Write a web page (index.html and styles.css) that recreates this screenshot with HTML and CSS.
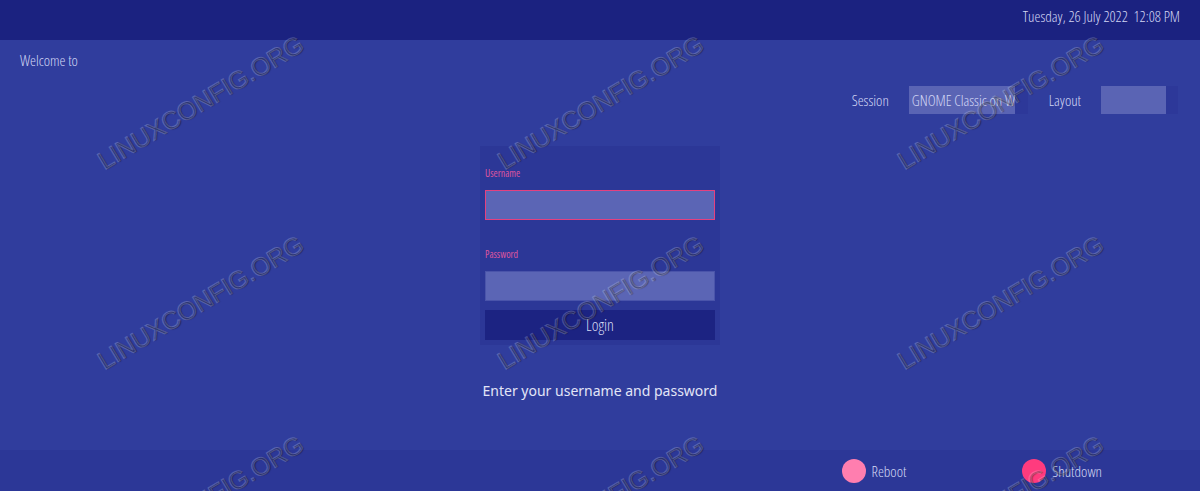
FILE: index.html
```html
<!DOCTYPE html>
<html lang="en">
<head>
    <meta charset="UTF-8">
    <meta name="viewport" content="width=device-width, initial-scale=1.0">
    <title>Login</title>
    <link rel="stylesheet" href="styles.css">
</head>
<body>
    <div class="topbar">
        <span class="clock">Tuesday, 26 July 2022&nbsp;&nbsp;12:08 PM</span>
    </div>

    <div class="main">
        <p class="welcome">Welcome to</p>

        <!-- Session / layout pickers -->
        <div class="pickers">
            <span class="picker-label">Session</span>
            <div class="select session">
                <span class="select-text">GNOME Classic on Wayland</span>
                <span class="select-arrow"></span>
            </div>
            <span class="picker-label">Layout</span>
            <div class="select layout">
                <span class="select-text"></span>
                <span class="select-arrow"></span>
            </div>
        </div>

        <!-- Login box -->
        <div class="login-box">
            <label class="field-label">Username</label>
            <div class="input focused"></div>
            <label class="field-label pw">Password</label>
            <div class="input"></div>
            <div class="login-btn">Login</div>
        </div>

        <p class="message">Enter your username and password</p>
    </div>

    <div class="bottombar">
        <div class="action">
            <span class="dot reboot"></span>
            <span>Reboot</span>
        </div>
        <div class="action">
            <span class="dot shutdown"></span>
            <span>Shutdown</span>
        </div>
    </div>

    <!-- Watermark over everything -->
    <div class="watermarks">
        <span>LINUXCONFIG.ORG</span>
        <span>LINUXCONFIG.ORG</span>
        <span>LINUXCONFIG.ORG</span>
        <span>LINUXCONFIG.ORG</span>
        <span>LINUXCONFIG.ORG</span>
        <span>LINUXCONFIG.ORG</span>
        <span>LINUXCONFIG.ORG</span>
        <span>LINUXCONFIG.ORG</span>
        <span>LINUXCONFIG.ORG</span>
    </div>
</body>
</html>
```

FILE: styles.css
```css
body {
    margin: 0;
    height: 100vh;
    overflow: hidden;
    background-color: #303d9d;
    font-family: "Open Sans", "DejaVu Sans", sans-serif;
    font-stretch: 75%;
    font-weight: 300;
    color: #d3d7f4;
    display: flex;
    flex-direction: column;
    position: relative;
}

.topbar {
    height: 40px;
    flex: none;
    background-color: #1b2280;
    display: flex;
    justify-content: flex-end;
    align-items: center;
    padding: 0 20px;
}

.clock {
    font-size: 15px;
    margin-top: -8px;
}

.main {
    flex: 1;
    display: flex;
    flex-direction: column;
}

.welcome {
    margin: 12px 0 0 20px;
    font-size: 15px;
    line-height: 16px;
}

.pickers {
    margin-top: 18px;
    padding-right: 22px;
    display: flex;
    justify-content: flex-end;
    align-items: center;
    height: 28px;
}

.picker-label {
    font-size: 15px;
    margin-right: 20px;
}

.select {
    display: flex;
    height: 28px;
    margin-right: 21px;
}

.select:last-child {
    margin-right: 0;
}

.select-text {
    background-color: #5a64b4;
    font-size: 15px;
    line-height: 28px;
    padding-left: 3px;
    white-space: nowrap;
    overflow: hidden;
    flex: none;
}

.select-arrow {
    background-color: #2d3899;
    flex: none;
}

.session .select-text { width: 103px; }
.session .select-arrow { width: 13px; }
.layout .select-text { width: 62px; }
.layout .select-arrow { width: 12px; }

.login-box {
    align-self: center;
    margin-top: 32px;
    width: 230px;
    padding: 21px 5px 5px;
    background-color: #2c3797;
    display: flex;
    flex-direction: column;
}

.field-label {
    color: #dd559f;
    font-size: 10px;
    font-weight: 400;
    line-height: 12px;
    margin-bottom: 11px;
}

.field-label.pw {
    margin-top: 28px;
    margin-bottom: 11px;
}

.input {
    height: 28px;
    background-color: #5b65b5;
    border: 1px solid #4a54aa;
}

.input.focused {
    border-color: #e5407f;
}

.login-btn {
    margin-top: 9px;
    height: 30px;
    background-color: #1c2382;
    color: #d6d9f3;
    font-size: 16px;
    line-height: 30px;
    text-align: center;
}

.message {
    margin: 36px 0 0;
    text-align: center;
    font-family: "Noto Sans", sans-serif;
    font-stretch: 100%;
    font-weight: 400;
    font-size: 14px;
    line-height: 20px;
    color: #e2e5f7;
}

.bottombar {
    height: 41px;
    flex: none;
    background-color: #2c3797;
    display: flex;
    justify-content: flex-end;
    align-items: center;
    padding-right: 98px;
    gap: 116px;
}

.action {
    display: flex;
    align-items: center;
    gap: 6px;
    font-size: 15px;
}

.dot {
    width: 24px;
    height: 24px;
    border-radius: 50%;
}

.dot.reboot { background-color: #ff7eaf; }
.dot.shutdown { background-color: #ff3b7e; }

/* Watermark layer */
.watermarks {
    position: absolute;
    inset: 0;
    overflow: hidden;
    display: grid;
    grid-template-columns: repeat(3, 400px);
    grid-template-rows: repeat(3, 200px);
    padding-top: 2px;
    pointer-events: none;
}

.watermarks span {
    place-self: center;
    transform: rotate(-31deg);
    font-family: "Liberation Sans", Arial, sans-serif;
    font-stretch: 100%;
    font-weight: 400;
    font-size: 25px;
    white-space: nowrap;
    color: rgba(255, 255, 255, 0.07);
    -webkit-text-stroke: 1px rgba(255, 255, 255, 0.2);
    text-shadow: 1px 1px 1px rgba(0, 0, 0, 0.35);
}
```
